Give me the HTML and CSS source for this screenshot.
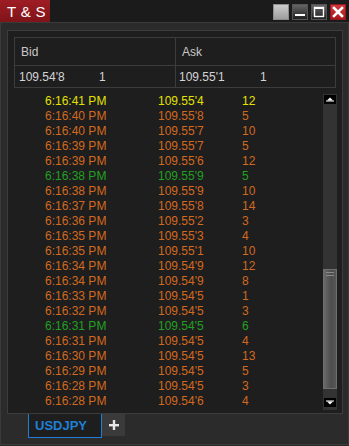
FILE: index.html
```html
<!DOCTYPE html>
<html lang="en">
  <head>
    <meta charset="UTF-8" />
    <meta name="viewport" content="width=device-width, initial-scale=1.0" />
    <title>T &amp; S</title>
    <link rel="stylesheet" href="styles.css">
  </head>
  <body>
    <div class="window">
      <div class="titlebar">
        <div class="title">T &amp; S</div>
        <div class="controls">
          <span class="btn btn-blank"></span>
          <span class="btn btn-dark">
            <svg width="16" height="16" viewBox="0 0 16 16"><rect x="3" y="10" width="10" height="2" fill="#fff"/></svg>
          </span>
          <span class="btn btn-dark">
            <svg width="16" height="16" viewBox="0 0 16 16"><rect x="3.5" y="3.5" width="9" height="9" fill="none" stroke="#fff" stroke-width="1.4"/><rect x="3" y="3" width="10" height="2" fill="#fff"/></svg>
          </span>
          <span class="btn btn-close">
            <svg width="16" height="16" viewBox="0 0 16 16"><path d="M4 4 L12 12 M12 4 L4 12" stroke="#fff" stroke-width="2.6" stroke-linecap="square"/></svg>
          </span>
        </div>
      </div>

      <div class="content">
        <div class="panel">
          <div class="quote">
            <div class="quote-col">
              <div class="quote-head">Bid</div>
              <div class="quote-data"><span class="q-price">109.54'8</span><span>1</span></div>
            </div>
            <div class="quote-col right">
              <div class="quote-head">Ask</div>
              <div class="quote-data"><span class="q-price">109.55'1</span><span>1</span></div>
            </div>
          </div>

          <div class="trades">
            <div class="rows">
              <div class="row up"><span class="t">6:16:41 PM</span><span class="p">109.55'4</span><span>12</span></div>
              <div class="row"><span class="t">6:16:40 PM</span><span class="p">109.55'8</span><span>5</span></div>
              <div class="row"><span class="t">6:16:40 PM</span><span class="p">109.55'7</span><span>10</span></div>
              <div class="row"><span class="t">6:16:39 PM</span><span class="p">109.55'7</span><span>5</span></div>
              <div class="row"><span class="t">6:16:39 PM</span><span class="p">109.55'6</span><span>12</span></div>
              <div class="row buy"><span class="t">6:16:38 PM</span><span class="p">109.55'9</span><span>5</span></div>
              <div class="row"><span class="t">6:16:38 PM</span><span class="p">109.55'9</span><span>10</span></div>
              <div class="row"><span class="t">6:16:37 PM</span><span class="p">109.55'8</span><span>14</span></div>
              <div class="row"><span class="t">6:16:36 PM</span><span class="p">109.55'2</span><span>3</span></div>
              <div class="row"><span class="t">6:16:35 PM</span><span class="p">109.55'3</span><span>4</span></div>
              <div class="row"><span class="t">6:16:35 PM</span><span class="p">109.55'1</span><span>10</span></div>
              <div class="row"><span class="t">6:16:34 PM</span><span class="p">109.54'9</span><span>12</span></div>
              <div class="row"><span class="t">6:16:34 PM</span><span class="p">109.54'9</span><span>8</span></div>
              <div class="row"><span class="t">6:16:33 PM</span><span class="p">109.54'5</span><span>1</span></div>
              <div class="row"><span class="t">6:16:32 PM</span><span class="p">109.54'5</span><span>3</span></div>
              <div class="row buy"><span class="t">6:16:31 PM</span><span class="p">109.54'5</span><span>6</span></div>
              <div class="row"><span class="t">6:16:31 PM</span><span class="p">109.54'5</span><span>4</span></div>
              <div class="row"><span class="t">6:16:30 PM</span><span class="p">109.54'5</span><span>13</span></div>
              <div class="row"><span class="t">6:16:29 PM</span><span class="p">109.54'5</span><span>5</span></div>
              <div class="row"><span class="t">6:16:28 PM</span><span class="p">109.54'5</span><span>3</span></div>
              <div class="row"><span class="t">6:16:28 PM</span><span class="p">109.54'6</span><span>4</span></div>
            </div>

            <div class="scrollbar">
              <div class="sb-btn">
                <svg width="12" height="9" viewBox="0 0 12 9"><path d="M6 2.5 L9 5.5 L3 5.5 Z" fill="#fff"/><rect x="2" y="5.5" width="8" height="1" fill="#fff"/></svg>
              </div>
              <div class="sb-thumb">
                <span class="grip"></span>
                <span class="grip"></span>
              </div>
              <div class="sb-fill"></div>
              <div class="sb-btn down">
                <svg width="12" height="9" viewBox="0 0 12 9"><rect x="2" y="2.5" width="8" height="1" fill="#fff"/><path d="M3 3.5 L9 3.5 L6 6.5 Z" fill="#fff"/></svg>
              </div>
            </div>
          </div>
        </div>
      </div>

      <div class="tabs">
        <div class="tab active">USDJPY</div>
        <div class="tab-add">
          <svg width="23" height="22" viewBox="0 0 23 22"><rect x="7" y="10" width="10" height="2.4" fill="#e8e8e8"/><rect x="10.8" y="6" width="2.4" height="10" fill="#e8e8e8"/></svg>
        </div>
      </div>
    </div>
  </body>
</html>
```

FILE: styles.css
```css
body {
  margin: 0;
  background: #2a2a2a;
  font-family: "Liberation Sans", Arial, sans-serif;
  font-size: 12px;
  color: #cfcfcf;
}

.window {
  width: 349px;
  height: 446px;
  box-sizing: border-box;
  display: flex;
  flex-direction: column;
  background: #2b2b2b;
}

/* Title bar */
.titlebar {
  height: 22px;
  display: flex;
  align-items: flex-start;
  justify-content: space-between;
  background: #1b1b1b;
  border-bottom: 1px solid #3a3a3a;
}

.title {
  width: 50px;
  height: 22px;
  box-sizing: border-box;
  padding-left: 7px;
  line-height: 23px;
  font-size: 15px;
  letter-spacing: 0.3px;
  color: #fff;
  background: linear-gradient(#9e1d24, #7f1419);
}

.controls {
  display: flex;
  gap: 3px;
  padding: 4px 3px 0 0;
}

.btn {
  width: 16px;
  height: 16px;
  display: block;
}

.btn svg {
  display: block;
}

.btn-blank {
  background: linear-gradient(#cfcfcf, #9a9a9a);
  box-shadow: inset 0 0 0 1px #8c8c8c;
}

.btn-dark {
  background: linear-gradient(#6a6a6a, #1a1a1a);
  box-shadow: inset 0 0 0 1px #555;
}

.btn-close {
  background: linear-gradient(#d23a3e, #a8161b);
  box-shadow: inset 0 0 0 1px #8a1a1e;
}

/* Main area */
.content {
  padding: 7px 5px 0 6px;
  border-left: 1px solid #3a3a3a;
  border-right: 1px solid #3a3a3a;
}

.panel {
  height: 384px;
  box-sizing: border-box;
  border: 1px solid #3c3c3c;
  background: #1e1e1e;
  display: flex;
  flex-direction: column;
}

.quote {
  display: flex;
  margin: 6px 6px 0 6px;
  border: 1px solid #3c3c3c;
}

.quote-col {
  width: 160px;
}

.quote-col.right {
  flex: 1;
  border-left: 1px solid #3c3c3c;
}

.quote-head {
  height: 27px;
  line-height: 28px;
  padding-left: 6px;
  color: #c8c8c8;
  border-bottom: 1px solid #3c3c3c;
}

.quote-data {
  height: 21px;
  line-height: 22px;
  padding-left: 4px;
  color: #d4d4d4;
  display: flex;
}

.quote-col.right .quote-data {
  padding-left: 3px;
}

.q-price {
  width: 80px;
}

.quote-col.right .q-price {
  width: 81px;
}

/* Trades list */
.trades {
  display: flex;
  margin-top: 6px;
  height: 316px;
}

.rows {
  flex: 1;
  padding-left: 37px;
}

.row {
  display: flex;
  height: 15px;
  line-height: 15px;
  color: #d2691e;
}

.row .t {
  width: 113px;
}

.row .p {
  width: 84px;
}

.row.up {
  color: #e2e200;
}

.row.buy {
  color: #22a022;
}

.scrollbar {
  width: 14px;
  margin-right: 5px;
  background: #333;
  display: flex;
  flex-direction: column;
  align-items: center;
}

.sb-btn {
  width: 12px;
  height: 9px;
  margin-top: 1px;
  background: #000;
}

.sb-btn svg {
  display: block;
}

.sb-btn.down {
  margin-top: 0;
  margin-bottom: 3px;
}

.sb-thumb {
  width: 14px;
  height: 120px;
  box-sizing: border-box;
  margin-top: 165px;
  border: 1px solid #6e6e6e;
  background: linear-gradient(to right, #6a6a6a, #4c4c4c 60%, #575757);
  display: flex;
  flex-direction: column;
  align-items: center;
  gap: 2px;
  padding-top: 2px;
}

.grip {
  width: 8px;
  height: 1px;
  background: #8a8a8a;
}

.sb-fill {
  flex: 1;
}

/* Tabs */
.tabs {
  height: 30px;
  display: flex;
  align-items: flex-start;
  padding-left: 27px;
  border-left: 1px solid #3a3a3a;
  border-right: 1px solid #3a3a3a;
  border-bottom: 1px solid #3a3a3a;
}

.tab {
  width: 74px;
  height: 24px;
  box-sizing: border-box;
  padding-left: 6px;
  line-height: 23px;
  font-size: 13px;
  font-weight: bold;
  color: #1f7fd6;
  background: #1e1e1e;
  border: 1px solid #1f7fd6;
  border-top: none;
}

.tab-add {
  width: 23px;
  height: 22px;
  background: #3a3a3a;
}

.tab-add svg {
  display: block;
}
```
